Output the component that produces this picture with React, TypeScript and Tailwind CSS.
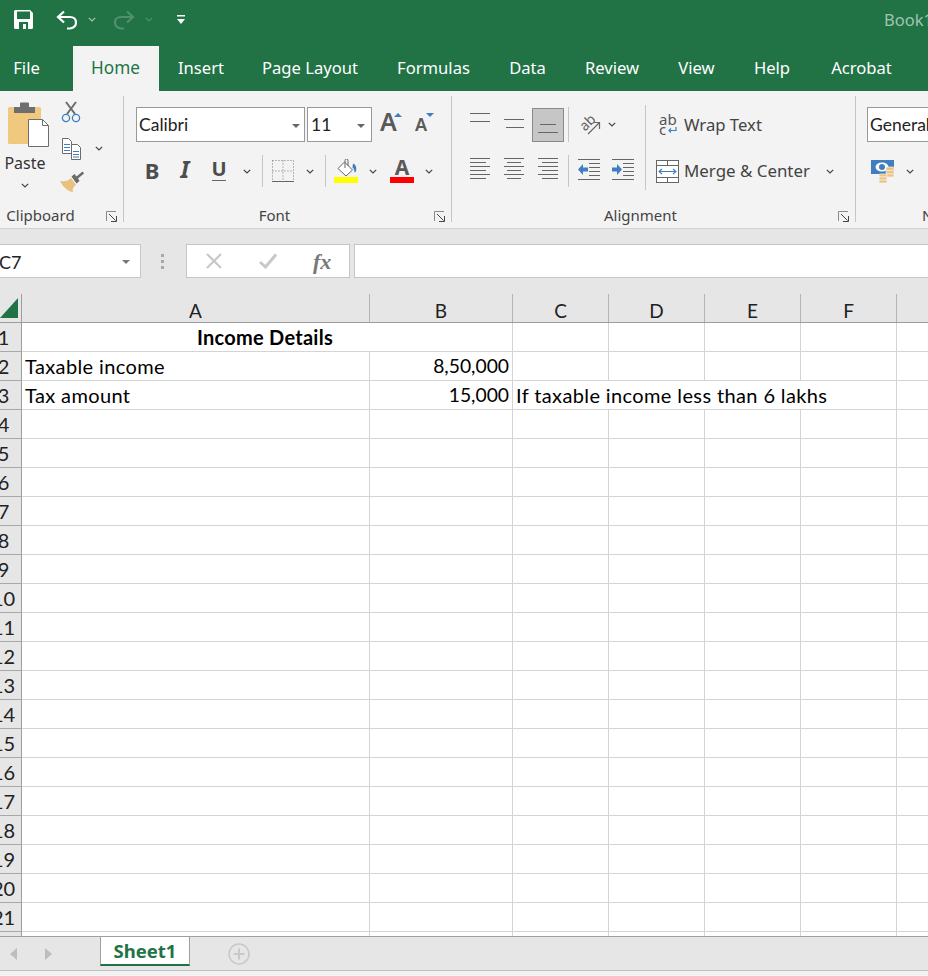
import React from "react";

const Chev = ({ className = "", color = "#444" }: { className?: string; color?: string }) => (
  <svg viewBox="0 0 8 5" className={`w-[8px] h-[5px] shrink-0 ${className}`} fill="none" stroke={color} strokeWidth="1.2">
    <path d="M.8.8 4 4 7.2.8" />
  </svg>
);

const Launcher = () => (
  <svg viewBox="0 0 11 11" className="w-[11px] h-[11px] ml-[9px] mr-[6px] shrink-0" fill="none">
    <path d="M.5 10V.5H10" stroke="#8a8a8a" />
    <path d="M3 3l6.5 6.5M5 10.5h5.5V5" stroke="#444" />
  </svg>
);

const Sep = ({ className = "" }: { className?: string }) => <div className={`w-px bg-[#c6c6c6] shrink-0 ${className}`} />;

const Lines = ({ ys, className }: { ys: [number, number, number][]; className: string }) => (
  <svg viewBox="0 0 20 35" preserveAspectRatio="xMinYMin slice" className={`w-[20px] h-[35px] shrink-0 ${className}`} stroke="#666" strokeWidth="1">
    {ys.map(([y, a, b]) => (
      <line key={y} x1={a} x2={b} y1={y + 0.5} y2={y + 0.5} />
    ))}
  </svg>
);

const Indent = ({ inc, className }: { inc?: boolean; className: string }) => (
  <svg viewBox="0 0 22 32" className={`w-[22px] h-[32px] shrink-0 ${className}`}>
    <g stroke="#666" strokeWidth="1">
      <path d="M0 4.500h22M0 24.500h22" />
      <path d="M11 8.500h11M11 12.500h11M11 16.500h11M11 20.500h11" />
    </g>
    {inc ? (
      <path d="M0 12.500h5V9l5 5.500-5 5.500v-3.500H0z" fill="#3f7fc1" />
    ) : (
      <path d="M10 12.500H5V9l-5 5.500 5 5.500v-3.500h5z" fill="#3f7fc1" />
    )}
  </svg>
);

const tabs = [
  { t: "File", c: "ml-[14px] w-[25px]" },
  { t: "Insert", c: "ml-[20px] w-[44px]" },
  { t: "Page Layout", c: "ml-[39px] w-[96px]" },
  { t: "Formulas", c: "ml-[39px] w-[73px]" },
  { t: "Data", c: "ml-[39px] w-[37px]" },
  { t: "Review", c: "ml-[39px] w-[54px]" },
  { t: "View", c: "ml-[39px] w-[37px]" },
  { t: "Help", c: "ml-[39px] w-[36px]" },
  { t: "Acrobat", c: "ml-[40px] w-[63px]" },
];

const cols = [
  { t: "A", c: "w-[348px]" },
  { t: "B", c: "w-[143px]" },
  { t: "C", c: "w-[96px]" },
  { t: "D", c: "w-[96px]" },
  { t: "E", c: "w-[96px]" },
  { t: "F", c: "w-[96px]" },
];

const rowNums = Array.from({ length: 22 }, (_, i) => i + 1);
const lineCell = "border-r border-b border-[#d4d4d4] h-full shrink-0";
const textCell = "pl-[3px] text-[20px] tracking-[0.38px] text-black whitespace-nowrap flex items-center";
const numCell = "pr-[3px] text-[19.300px] text-black flex items-center justify-end";

const RowHead = ({ n }: { n: number }) => (
  <div className="-ml-[16px] w-[38px] h-full shrink-0 bg-[#e6e6e6] border-r border-b border-r-[#9c9c9c] border-b-[#a8a8a8] flex items-center justify-center pl-[2px] text-[20px] text-[#222]">
    {n}
  </div>
);

const Rest = () => <div className="flex-1 border-b border-[#d4d4d4] h-full" />;

const Row = ({ n }: { n: number }) => {
  if (n === 1)
    return (
      <div className="flex h-[29px]">
        <RowHead n={n} />
        <div className={`${lineCell} w-[491px] flex items-center justify-center font-bold text-[20px] tracking-[0.25px] text-black pr-[4px]`}>Income Details</div>
        {cols.slice(2).map((c) => (
          <div key={c.t} className={`${lineCell} ${c.c}`} />
        ))}
        <Rest />
      </div>
    );
  if (n === 2)
    return (
      <div className="flex h-[29px]">
        <RowHead n={n} />
        <div className={`${lineCell} w-[348px] ${textCell}`}>Taxable income</div>
        <div className={`${lineCell} w-[143px] ${numCell}`}>8,50,000</div>
        {cols.slice(2).map((c) => (
          <div key={c.t} className={`${lineCell} ${c.c}`} />
        ))}
        <Rest />
      </div>
    );
  if (n === 3)
    return (
      <div className="flex h-[29px]">
        <RowHead n={n} />
        <div className={`${lineCell} w-[348px] ${textCell}`}>Tax amount</div>
        <div className={`${lineCell} w-[143px] ${numCell}`}>15,000</div>
        <div className={`${lineCell} w-[384px] ${textCell}`}>If taxable income less than 6 lakhs</div>
        <Rest />
      </div>
    );
  return (
    <div className="flex h-[29px]">
      <RowHead n={n} />
      {cols.map((c) => (
        <div key={c.t} className={`${lineCell} ${c.c}`} />
      ))}
      <Rest />
    </div>
  );
};

export default function App() {
  return (
    <div className="w-[928px] h-[976px] overflow-hidden flex flex-col bg-[#f3f3f3] font-['Noto_Sans',sans-serif] text-[#444]">
      {/* title bar */}
      <div className="h-[46px] shrink-0 bg-[#217346] flex items-center pb-[7px] whitespace-nowrap">
        <svg viewBox="0 0 19 19" className="w-[19px] h-[19px] ml-[14px] shrink-0">
          <path d="M0 1.500A1.500 1.500 0 0 1 1.500 0H16l3 3v14.500a1.500 1.500 0 0 1-1.500 1.500h-16A1.500 1.500 0 0 1 0 17.500z" fill="#fff" />
          <rect x="3" y="1.500" width="13" height="7.500" fill="#217346" />
          <rect x="5" y="12" width="9" height="7" fill="#217346" />
          <rect x="9" y="14" width="3" height="5" fill="#fff" />
        </svg>
        <svg viewBox="0 0 22 20" className="w-[22px] h-[20px] ml-[23px] shrink-0" fill="none" stroke="#fff" strokeWidth="2.200">
          <path d="M8 1.500 2 7l6 5.500" />
          <path d="M2 7h12c4 0 6 2.500 6 5.500S18 18 14 18.500H11" />
        </svg>
        <Chev className="ml-[10px]" color="#a6c7b5" />
        <svg viewBox="0 0 22 20" className="w-[22px] h-[20px] ml-[17px] shrink-0" fill="none" stroke="#4f9070" strokeWidth="2.200">
          <path d="M14 1.500 20 7l-6 5.500" />
          <path d="M20 7H8c-4 0-6 2.500-6 5.500S4 18 8 18.500h3" />
        </svg>
        <Chev className="ml-[10px]" color="#4f9070" />
        <svg viewBox="0 0 8 10" className="w-[8px] h-[10px] ml-[24px] shrink-0" fill="#fff">
          <rect x="0" y="0" width="8" height="1.500" />
          <path d="M0 4h8L4 9z" />
        </svg>
        <span className="ml-[699px] mt-[1px] text-[16.5px] text-[#9fc4b0]">Book1 - Excel</span>
      </div>

      {/* tabs */}
      <div className="h-[45px] shrink-0 bg-[#217346] flex pb-[1px] text-[16.6px] text-white whitespace-nowrap">
        {tabs.slice(0, 1).map((t) => (
          <div key={t.t} className={`${t.c} h-full flex items-center justify-center`}>{t.t}</div>
        ))}
        <div className="ml-[34px] w-[86px] h-[45px] bg-[#f3f3f3] text-[#217346] text-[17.200px] flex items-center justify-center pb-[1px] pr-[1px]">Home</div>
        {tabs.slice(1).map((t) => (
          <div key={t.t} className={`${t.c} h-full flex items-center justify-center`}>{t.t}</div>
        ))}
      </div>

      {/* ribbon */}
      <div className="h-[138px] shrink-0 bg-[#f3f3f3] border-b border-[#d2d2d2] flex whitespace-nowrap">
        {/* Clipboard */}
        <div className="-ml-[16px] w-[139px] shrink-0 flex flex-col">
          <div className="h-[113px] flex pl-[16px] pt-[10px]">
            <div className="w-[50px] flex flex-col items-center shrink-0">
              <svg viewBox="0 0 50 46" className="w-[50px] h-[46px]">
                <rect x="8" y="6" width="33" height="37" rx="1.500" fill="#f0c97f" />
                <path d="M14 6h6V2.500a1 1 0 0 1 1-1h7a1 1 0 0 1 1 1V6h6v6H14z" fill="#6e6e6e" />
                <path d="M28.500 18.500h14l6 6v21h-20z" fill="#fff" stroke="#6e6e6e" />
                <path d="M42.500 18.500v6h6" fill="none" stroke="#6e6e6e" />
              </svg>
              <span className="text-[16px] leading-[22px] mt-[5px] text-[#333]">Paste</span>
              <Chev className="mt-[9px]" />
            </div>
            <div className="ml-[10px] flex flex-col">
              <svg viewBox="0 0 24 24" className="w-[24px] h-[24px]" fill="none">
                <path d="M6 1l9 12M16 1 7 13" stroke="#6b6b6b" strokeWidth="2" />
                <circle cx="6" cy="17" r="3.600" stroke="#3f7fc1" strokeWidth="1.300" />
                <circle cx="16" cy="17" r="3.600" stroke="#3f7fc1" strokeWidth="1.300" />
              </svg>
              <div className="flex items-center mt-[11px]">
                <svg viewBox="0 0 24 24" className="w-[24px] h-[24px]" fill="none">
                  <path d="M2.500 2.500h6l3 3v12h-9z" fill="#fff" stroke="#6b6b6b" />
                  <path d="M11.500 8.500h6l3 3v12h-9z" fill="#fff" stroke="#6b6b6b" />
                  <path d="M4 8.500h6M4 11.500h6M4 14.500h6" stroke="#3f7fc1" />
                  <path d="M13 15.500h6M13 18.500h6M13 21h6" stroke="#3f7fc1" />
                </svg>
                <Chev className="ml-[11px]" />
              </div>
              <svg viewBox="0 0 24 24" className="w-[24px] h-[24px] mt-[10px]">
                <path d="M0 11c5 1 9-.5 11-3l5 7c-3 2-4 4.500-3 7-5-.5-10-5-13-11z" fill="#e8c27d" />
                <path d="M11.500 6.500l3-2.500 2 2.500 6-5 1.500 2-6 5 1.500 2.500-3 2.500z" fill="#6b6b6b" />
              </svg>
            </div>
          </div>
          <div className="h-[24px] flex items-center">
            <span className="flex-1 text-center text-[15px] text-[#444] pb-[2px]">Clipboard</span>
            <Launcher />
          </div>
        </div>
        <Sep className="h-[126px] mt-[5px] bg-[#b4b4b4]" />

        {/* Font */}
        <div className="w-[327px] shrink-0 flex flex-col pt-[16px]">
          <div className="h-[35px] flex items-center">
            <div className="ml-[12px] w-[169px] h-[35px] bg-white border border-[#999] flex items-center justify-between pt-[2px] pl-[2px] pr-[4px] font-['Lato'] text-[17.5px] text-[#222]">
              Calibri
              <svg viewBox="0 0 8 4" className="w-[8px] h-[4px]"><path d="M0 0h8L4 4z" fill="#666" /></svg>
            </div>
            <div className="ml-[2px] w-[65px] h-[35px] bg-white border border-[#999] flex items-center justify-between pt-[2px] pl-[3px] pr-[6px] font-['Lato'] text-[17.5px] text-[#222]">
              11
              <svg viewBox="0 0 8 4" className="w-[8px] h-[4px]"><path d="M0 0h8L4 4z" fill="#666" /></svg>
            </div>
            <div className="ml-[8px] w-[22px] h-[35px] flex items-end pb-[8px] relative">
              <span className="text-[25px] leading-[25px] font-semibold text-[#595959]">A</span>
              <span className="absolute left-[14px] top-[6px] w-0 h-0 border-x-[4px] border-x-transparent border-b-[4px] border-b-[#3f7fc1]" />
            </div>
            <div className="ml-[13px] w-[20px] h-[35px] flex items-end pb-[8px] relative">
              <span className="text-[18px] leading-[20px] font-semibold text-[#595959]">A</span>
              <span className="absolute left-[11px] top-[6px] w-0 h-0 border-x-[4px] border-x-transparent border-t-[4px] border-t-[#3f7fc1]" />
            </div>
          </div>
          <div className="h-[32px] mt-[13px] flex items-center">
            <span className="ml-[18px] w-[20px] -mt-[3px] text-center text-[22px] leading-none font-bold text-[#4d4d4d]">B</span>
            <span className="ml-[13px] w-[20px] -mt-[3px] text-center text-[23px] leading-none italic font-bold text-[#4d4d4d]">I</span>
            <span className="ml-[14px] w-[20px] -mt-[5px] text-center text-[20px] leading-[21px] font-bold text-[#4d4d4d] relative">
              U
              <span className="absolute left-[3px] right-[3px] -bottom-[2px] h-px bg-[#666]" />
            </span>
            <Chev className="ml-[14px]" />
            <Sep className="ml-[11px] h-[32px]" />
            <svg viewBox="0 0 22 22" className="ml-[9px] w-[22px] h-[22px] shrink-0" fill="none">
              <path d="M.5 .5h21M.5 11h21M11 .5v21M.5 .5v21M21.500 .5v21" stroke="#777" strokeDasharray="1 2" />
              <path d="M0 21.500h22" stroke="#666" />
            </svg>
            <Chev className="ml-[12px]" />
            <Sep className="ml-[11px] h-[32px]" />
            <svg viewBox="0 0 24 24" className="ml-[8px] w-[24px] h-[24px] shrink-0">
              <path d="M4 9.500l6.500-6.500 8 8-6.500 6-8-7.500z" fill="#fff" stroke="#666" />
              <path d="M11 9V1.500a1.500 1.500 0 0 1 3 0V7" fill="none" stroke="#666" />
              <path d="M19 4.500c2.500 1 4 3.500 3 8l-1.500 1c0-3-1-4-2-5z" fill="#3f7fc1" />
              <rect x="0" y="18" width="24" height="6" fill="#ffff00" />
            </svg>
            <Chev className="ml-[11px]" />
            <div className="ml-[13px] w-[24px] h-[24px] flex flex-col items-center shrink-0">
              <span className="h-[18px] text-[21px] leading-[17px] font-bold text-[#595959]">A</span>
              <span className="w-[24px] h-[6px] bg-[#ff0000]" />
            </div>
            <Chev className="ml-[11px]" />
          </div>
          <div className="flex-1" />
          <div className="h-[24px] flex items-center">
            <span className="flex-1 text-center text-[15px] pb-[2px]">Font</span>
            <Launcher />
          </div>
        </div>
        <Sep className="h-[126px] mt-[5px] bg-[#b4b4b4]" />

        {/* Alignment */}
        <div className="w-[403px] shrink-0 flex flex-col">
          <div className="flex h-[113px] pt-[14px]">
            <div className="w-[193px] shrink-0 flex flex-col pt-[2px]">
              <div className="h-[35px] flex items-center">
                <Lines className="ml-[18px]" ys={[[6, 0, 20], [14, 0, 20]]} />
                <Lines className="ml-[14px]" ys={[[12, 0, 20], [20, 2, 20]]} />
                <div className="ml-[8px] w-[32px] h-[34px] mt-[1px] bg-[#c6c6c6] border border-[#8a8a8a] flex justify-center shrink-0">
                  <svg viewBox="0 0 20 32" className="w-[20px] h-[32px]" stroke="#666" strokeWidth="1">
                    <path d="M2 15.500h16M0 23.500h20" />
                  </svg>
                </div>
                <Sep className="ml-[4px] h-[35px]" />
                <svg viewBox="0 0 21 22" className="ml-[10px] w-[21px] h-[22px] shrink-0 overflow-visible">
                  <text x="8" y="8" textAnchor="middle" dominantBaseline="central" fontSize="14" fill="#666" fontFamily="Noto Sans" transform="rotate(-45 8 8)">ab</text>
                  <path d="M9 20 20 9M14 8.500h6.500V15" fill="none" stroke="#666" strokeWidth="1.200" />
                </svg>
                <Chev className="ml-[8px]" />
              </div>
              <div className="h-[32px] mt-[13px] flex items-center">
                <Lines className="ml-[18px] h-[32px]" ys={[[4, 0, 20], [8, 0, 16], [12, 0, 20], [16, 0, 16], [20, 0, 20], [24, 0, 16]]} />
                <Lines className="ml-[14px] h-[32px]" ys={[[4, 0, 20], [8, 3, 17], [12, 0, 20], [16, 3, 17], [20, 0, 20], [24, 3, 17]]} />
                <Lines className="ml-[14px] h-[32px]" ys={[[4, 0, 20], [8, 4, 20], [12, 0, 20], [16, 4, 20], [20, 0, 20], [24, 4, 20]]} />
                <Sep className="ml-[10px] h-[32px]" />
                <Indent className="ml-[9px]" />
                <Indent inc className="ml-[12px]" />
              </div>
            </div>
            <Sep className="h-[85px] shrink-0" />
            <div className="flex flex-col pt-[2px]">
              <div className="h-[35px] flex items-center">
                <div className="ml-[13px] w-[18px] shrink-0 flex flex-col items-start leading-[10px] text-[15px] text-[#555] relative -mt-[2px]">
                  <span>ab</span>
                  <span>c</span>
                  <svg viewBox="0 0 9 7" className="absolute left-[9px] bottom-[0px] w-[9px] h-[7px]" fill="none" stroke="#3f7fc1" strokeWidth="1.200">
                    <path d="M8 0v3.500H1M3 1.500l-2 2 2 2" />
                  </svg>
                </div>
                <span className="ml-[7px] pt-[1px] text-[16.7px] text-[#444]">Wrap Text</span>
              </div>
              <div className="h-[32px] mt-[13px] flex items-center">
                <svg viewBox="0 0 23 23" className="ml-[10px] w-[23px] h-[23px] shrink-0" fill="none">
                  <rect x=".5" y=".5" width="22" height="22" fill="#fff" stroke="#666" />
                  <path d="M.5 5.500h22M.5 17.500h22M11.500 .5v5M11.500 17.500v5" stroke="#666" />
                  <path d="M3 11.500h17M6 9l-3 2.500L6 14M17 9l3 2.500-3 2.500" stroke="#3f7fc1" strokeWidth="1.100" />
                </svg>
                <span className="ml-[5px] w-[126px] text-[16.9px] text-[#444]">Merge &amp; Center</span>
                <Chev className="ml-[16px]" />
              </div>
            </div>
          </div>
          <div className="h-[24px] flex items-center">
            <span className="flex-1 text-center text-[15px] pb-[2px]">Alignment</span>
            <Launcher />
          </div>
        </div>
        <Sep className="h-[126px] mt-[5px] bg-[#b4b4b4]" />

        {/* Number */}
        <div className="flex-1 flex flex-col pt-[16px] min-w-0">
          <div className="ml-[11px] w-[100px] h-[35px] bg-white border border-[#999] flex items-center pt-[2px] pl-[2px] font-['Lato'] text-[17.5px] text-[#222]">General</div>
          <div className="h-[32px] mt-[13px] flex items-center">
            <svg viewBox="0 0 23 23" className="ml-[15px] w-[23px] h-[23px] shrink-0">
              <rect x="0" y="0" width="23" height="14" fill="#3f7fc1" />
              <ellipse cx="11" cy="7" rx="6.500" ry="4.500" fill="#fff" />
              <circle cx="11" cy="7" r="3" fill="#3f7fc1" />
              <g fill="#eec27f" stroke="#f3f3f3" strokeWidth=".7">
                <rect x="15" y="7" width="8" height="3.500" rx="1" />
                <rect x="15" y="10.500" width="8" height="3.500" rx="1" />
                <rect x="15" y="14" width="8" height="3" rx="1" />
                <rect x="8" y="14" width="8" height="3" rx="1" />
                <rect x="8" y="17" width="8" height="3" rx="1" />
                <rect x="8" y="20" width="8" height="3" rx="1" />
              </g>
            </svg>
            <Chev className="ml-[12px]" />
          </div>
          <div className="flex-1" />
          <div className="h-[24px] flex items-center pl-[66px] pb-[2px] text-[15px]">Number</div>
        </div>
      </div>

      {/* formula bar */}
      <div className="h-[65px] shrink-0 bg-[#e6e6e6] pt-[15px]">
        <div className="h-[34px] flex items-stretch whitespace-nowrap font-['Lato'] text-[18px] text-[#222]">
          <div className="-ml-[16px] w-[157px] bg-white border border-[#c6c6c6] flex items-center justify-between pt-[2px] pl-[14px] pr-[10px] shrink-0">
            C7
            <svg viewBox="0 0 8 4" className="w-[8px] h-[4px]"><path d="M0 0h8L4 4z" fill="#777" /></svg>
          </div>
          <div className="ml-[20px] w-[3px] flex flex-col justify-center gap-[3px] shrink-0">
            <span className="h-[3px] bg-[#a8a8a8]" />
            <span className="h-[3px] bg-[#a8a8a8]" />
            <span className="h-[3px] bg-[#a8a8a8]" />
          </div>
          <div className="ml-[22px] w-[164px] bg-white border border-[#c6c6c6] flex items-center shrink-0">
            <svg viewBox="0 0 16 16" className="ml-[19px] w-[16px] h-[16px] shrink-0" fill="none" stroke="#c8c8c8" strokeWidth="2.200">
              <path d="M1 1l14 14M15 1 1 15" />
            </svg>
            <svg viewBox="0 0 18 16" className="ml-[37px] w-[18px] h-[16px] shrink-0" fill="none" stroke="#c8c8c8" strokeWidth="3">
              <path d="M1 9l5.500 5L17 1.500" />
            </svg>
            <span className="ml-[36px] font-['Liberation_Serif'] italic font-bold text-[22px] text-[#777]">fx</span>
          </div>
          <div className="ml-[4px] flex-1 -mr-[4px] bg-white border border-[#c6c6c6]" />
        </div>
      </div>

      {/* sheet */}
      <div className="h-[642px] shrink-0 overflow-hidden bg-white font-['Lato',sans-serif]">
        <div className="flex h-[29px] bg-[#e6e6e6] border-b border-[#9c9c9c] text-[19px] text-[#222]">
          <div className="w-[22px] h-full shrink-0 border-r border-[#9c9c9c] flex items-center">
            <svg viewBox="0 0 18 20" className="w-[18px] h-[20px] shrink-0"><path d="M0 20 18 0v20z" fill="#217346" /></svg>
          </div>
          {cols.map((c) => (
            <div key={c.t} className={`${c.c} h-full shrink-0 border-r border-[#b4b4b4] flex items-center justify-center pt-[7px]`}>{c.t}</div>
          ))}
        </div>
        {rowNums.map((n) => (
          <Row key={n} n={n} />
        ))}
      </div>

      {/* sheet tabs */}
      <div className="h-[35px] shrink-0 bg-[#e6e6e6] border-t border-b border-t-[#a0a0a0] border-b-[#c0c0c0] flex items-stretch">
        <div className="ml-[10px] flex items-center">
          <svg viewBox="0 0 7 12" className="w-[7px] h-[12px]"><path d="M7 0v12L0 6z" fill="#bdbdbd" /></svg>
          <svg viewBox="0 0 7 12" className="ml-[28px] w-[7px] h-[12px]"><path d="M0 0v12l7-6z" fill="#bdbdbd" /></svg>
        </div>
        <div className="ml-[48px] w-[88px] h-[27px] bg-white border-x border-[#a0a0a0] border-b-2 border-b-[#217346] box-content flex items-center justify-center font-bold text-[18.500px] text-[#217346] font-['Noto_Sans']">Sheet1</div>
        <div className="ml-[38px] flex items-center">
          <svg viewBox="0 0 22 22" className="w-[22px] h-[22px]" fill="none" stroke="#c8c8c8" strokeWidth="1.500">
            <circle cx="11" cy="11" r="10" />
            <path d="M11 5.500v11M5.500 11h11" strokeWidth="2" />
          </svg>
        </div>
      </div>
      <div className="flex-1 bg-[#f3f3f3]" />
    </div>
  );
}
